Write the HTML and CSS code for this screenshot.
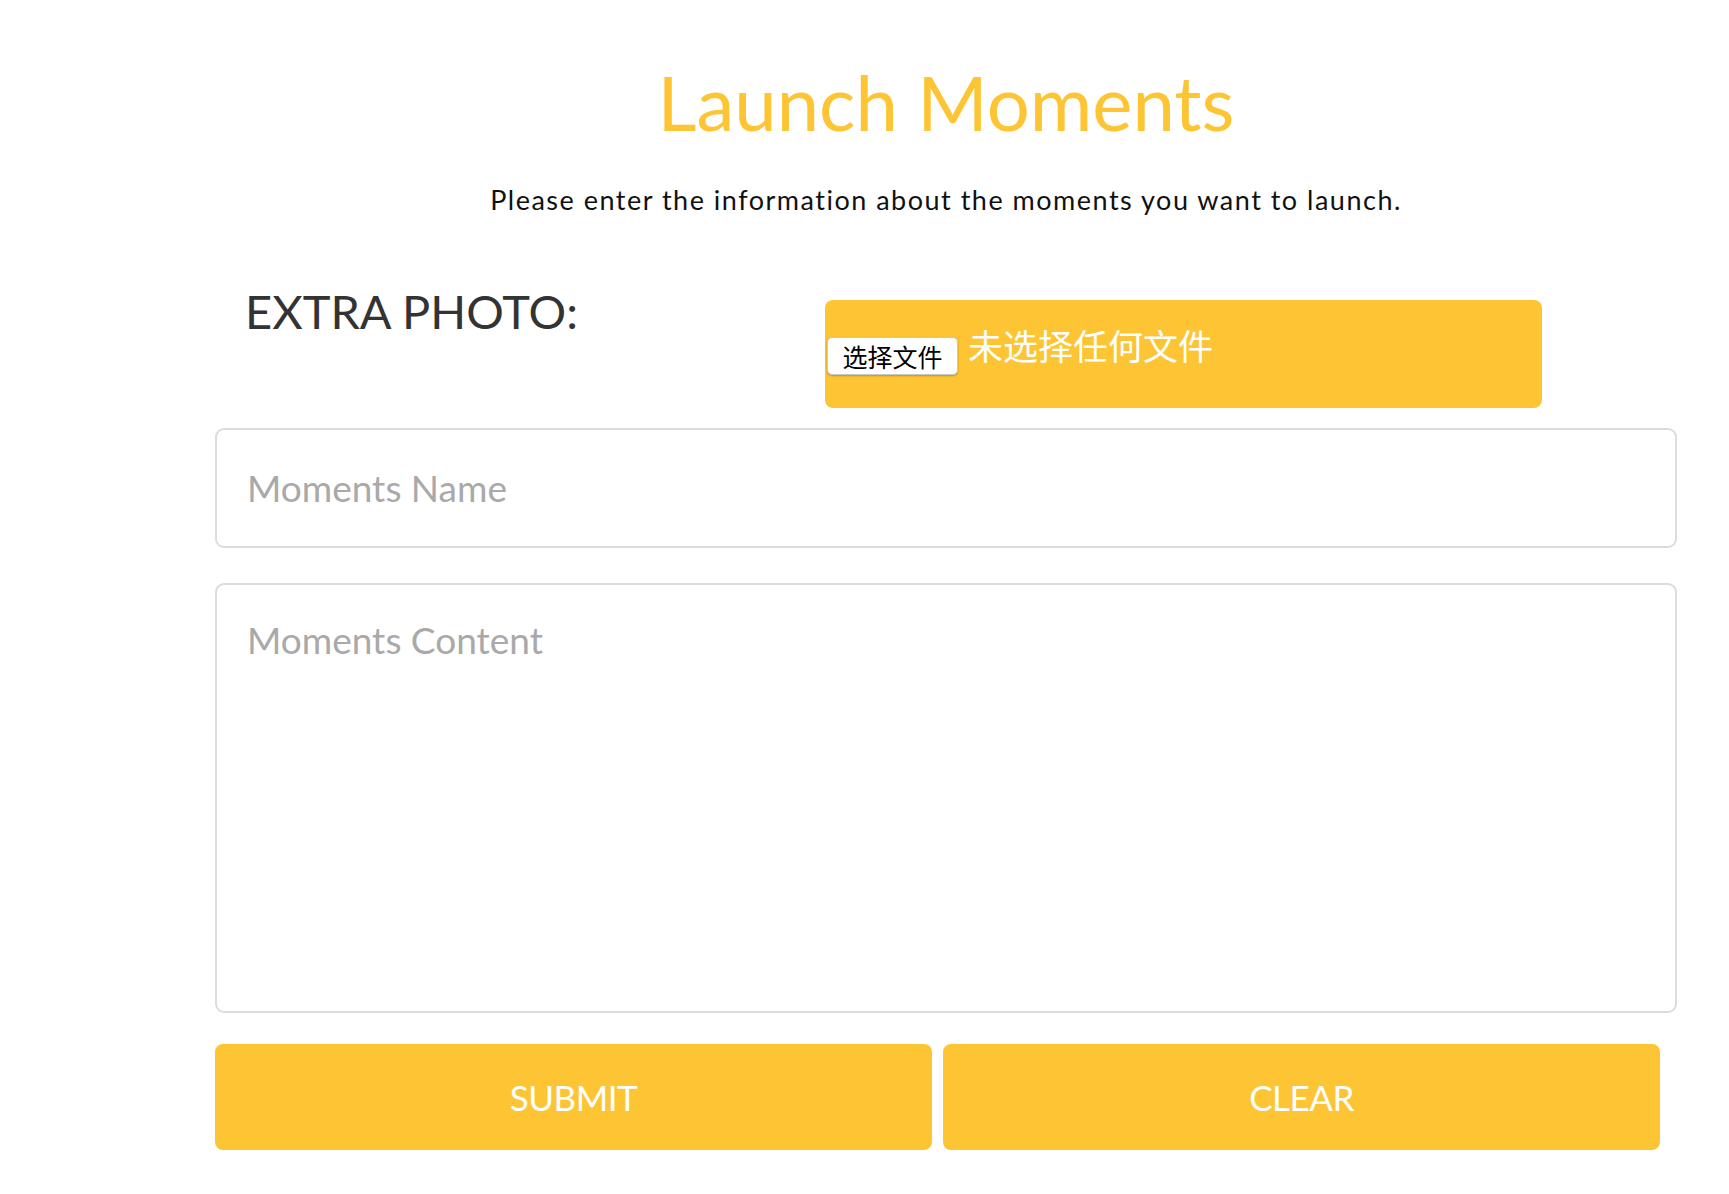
FILE: index.html
```html
<!DOCTYPE html>
<html lang="en">
<head>
<meta charset="utf-8">
<title>Launch Moments</title>
<link rel="stylesheet" href="styles.css">
</head>
<body>
<main class="main">
  <h1 class="title">Launch Moments</h1>
  <p class="subtitle">Please enter the information about the moments you want to launch.</p>
  <form class="form">
    <div class="photo-row">
      <label class="photo-label">EXTRA PHOTO:</label>
      <div class="file-box">
        <span class="file-btn">选择文件</span>
        <span class="file-name">未选择任何文件</span>
      </div>
    </div>
    <input class="field field-name" type="text" placeholder="Moments Name">
    <textarea class="field field-content" placeholder="Moments Content"></textarea>
    <div class="actions">
      <button type="button" class="action">SUBMIT</button>
      <button type="button" class="action">CLEAR</button>
    </div>
  </form>
</main>
</body>
</html>
```

FILE: styles.css
```css
html, body {
  margin: 0;
  padding: 0;
  background: #ffffff;
}
body {
  font-family: Lato, "Noto Sans", sans-serif;
}
.main {
  width: 1462px;
  margin-left: 215px;
}
.title {
  margin: 0;
  padding-top: 56px;
  text-align: center;
  color: #fdc533;
  font-weight: 400;
  font-size: 76px;
  line-height: 1.2;
}
.subtitle {
  margin: 37px 0 0;
  text-align: center;
  color: #111;
  font-size: 27px;
  letter-spacing: 1.5px;
  line-height: 1.2;
}
.form {
  display: flex;
  flex-direction: column;
}
.photo-row {
  display: flex;
  margin-top: 83px;
  height: 108px;
}
.photo-label {
  width: 580px;
  padding-left: 30px;
  font-size: 47px;
  color: #333;
  line-height: 1;
  margin-top: -12px;
}
.file-box {
  width: 717px;
  height: 108px;
  background: #fdc533;
  border-radius: 8px;
  display: flex;
  align-items: flex-start;
  box-sizing: border-box;
  padding-left: 2px;
}
.file-btn {
  margin-top: 37px;
  height: 38px;
  width: 131px;
  box-sizing: border-box;
  background: #fff;
  border: 1px solid #c8c8c8;
  border-radius: 5px;
  box-shadow: 0 1px 2px rgba(0,0,0,0.25);
  font-family: "Noto Sans CJK SC", sans-serif;
  font-size: 25px;
  line-height: 36px;
  text-align: center;
  color: #000;
}
.file-name {
  margin-top: 21px;
  margin-left: 10px;
  font-family: "Noto Sans CJK SC", sans-serif;
  font-size: 35px;
  line-height: 48px;
  color: #fff;
}
.field {
  display: block;
  box-sizing: border-box;
  width: 1462px;
  border: 2px solid #dcdcdc;
  border-radius: 9px;
  padding: 0 30px;
  font-family: Lato, "Noto Sans", sans-serif;
  font-size: 37px;
  color: #333;
  background: #fff;
  outline: none;
}
.field::placeholder {
  color: #a9a9a9;
}
.field-name {
  margin-top: 20px;
  height: 120px;
}
.field-content {
  margin-top: 35px;
  height: 430px;
  padding-top: 32px;
  resize: none;
}
.actions {
  display: flex;
  gap: 11px;
  margin-top: 31px;
}
.action {
  width: 717px;
  height: 106px;
  border: none;
  border-radius: 8px;
  background: #fdc533;
  color: #fff;
  font-family: Lato, "Noto Sans", sans-serif;
  font-size: 35px;
  letter-spacing: -0.5px;
  padding: 0;
}
```
